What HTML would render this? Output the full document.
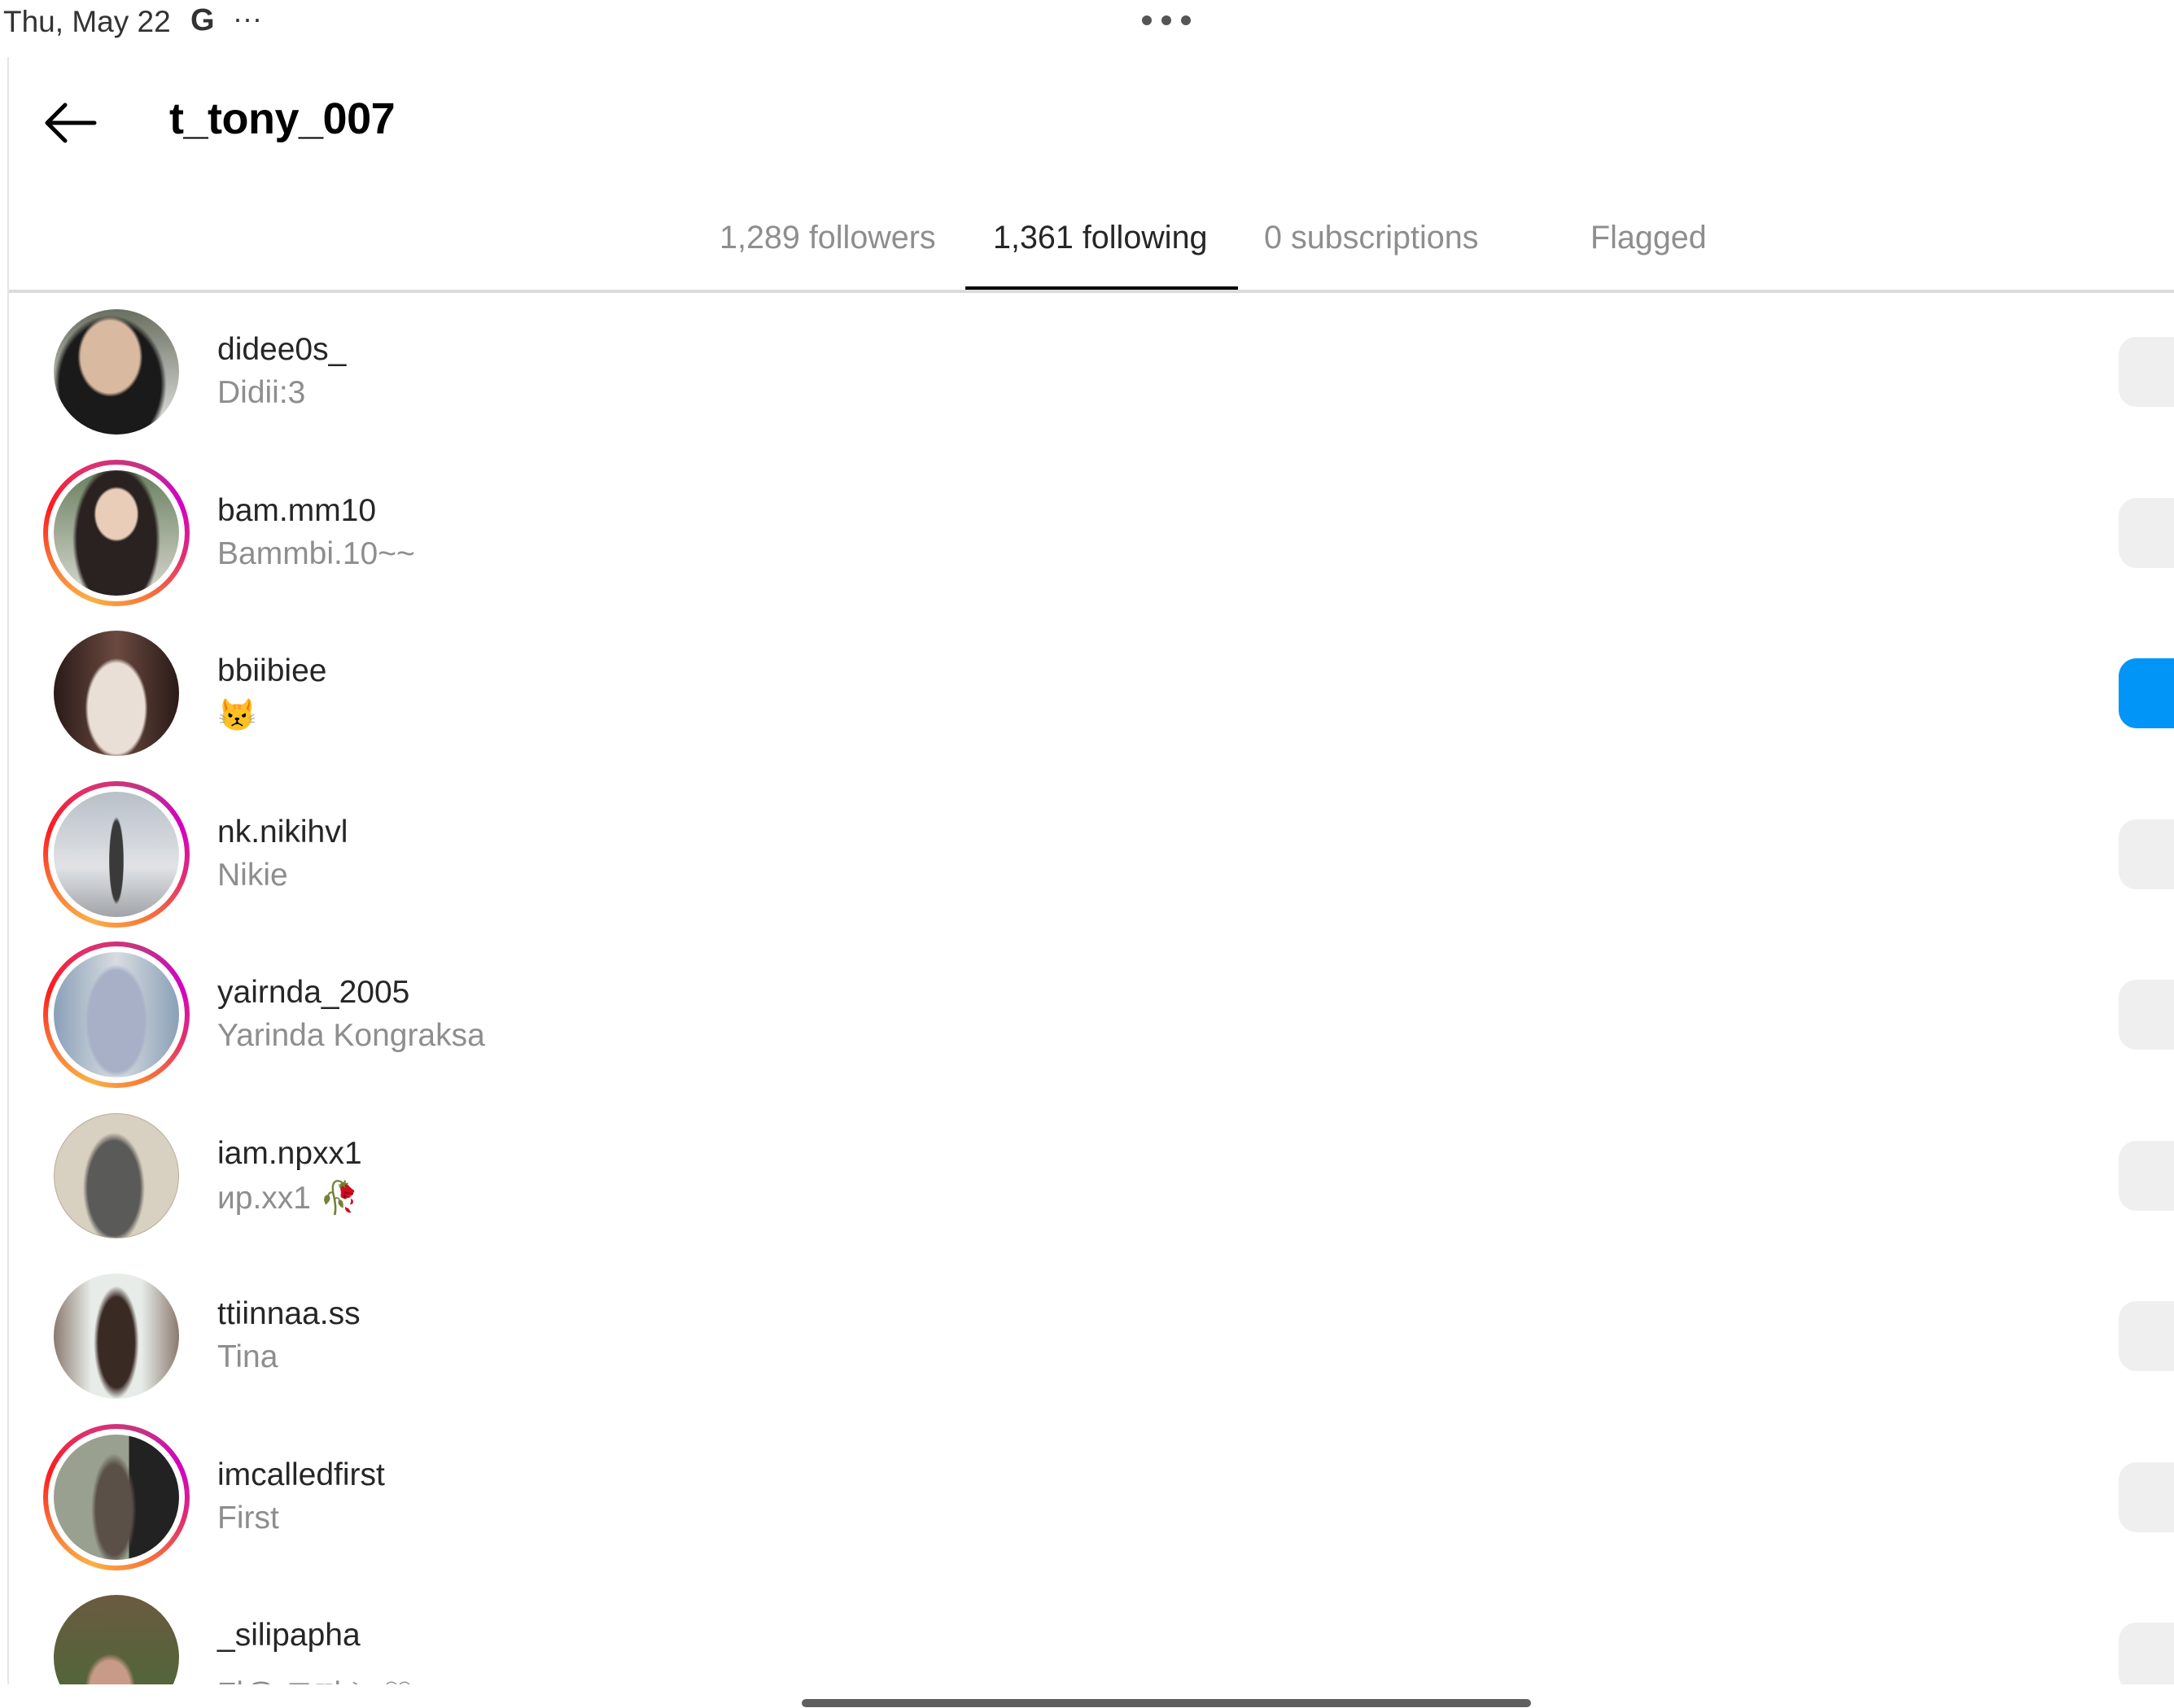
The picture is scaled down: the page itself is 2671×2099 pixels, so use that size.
<!DOCTYPE html>
<html><head><meta charset="utf-8"><style>
*{margin:0;padding:0;box-sizing:border-box}
body{width:2671px;height:2099px;background:#fff;position:relative;overflow:hidden;font-family:"Liberation Sans","Noto Sans CJK KR",sans-serif}
.a{position:absolute;white-space:nowrap}
.tab{position:absolute;top:270px;font-size:39.5px;color:#8e8e8e}
.row{position:absolute;left:0;width:2671px;height:198px}
.av{position:absolute;left:66px;width:154px;height:154px;border-radius:50%}
.ring{position:absolute;left:53px;width:180px;height:180px;border-radius:50%;background:conic-gradient(from 200deg,#fcaf45,#f77737,#fd1d1d,#e1306c,#c13584,#d300c5,#e1306c,#f77737,#fcaf45)}
.ring::after{content:"";position:absolute;left:6px;top:6px;right:6px;bottom:6px;border-radius:50%;background:#fff}
.un{position:absolute;left:267px;font-size:39px;color:#262626}
.sub{position:absolute;left:267px;font-size:39px;color:#8e8e8e}
.btn{position:absolute;left:2603px;width:100px;height:86px;border-radius:22px;background:#efefef}
</style></head><body>
<div class="a" style="left:4px;top:6px;font-size:37px;color:#333">Thu, May 22</div>
<div class="a" style="left:234px;top:4px;font-size:38px;font-weight:bold;color:#333">G</div>
<div class="a" style="left:286px;top:2px;font-size:36px;color:#333">···</div>
<div class="a" style="left:1403px;top:19px;width:62px;height:14px">
<span style="position:absolute;left:0;top:0;width:12px;height:12px;border-radius:50%;background:#555"></span>
<span style="position:absolute;left:24px;top:0;width:12px;height:12px;border-radius:50%;background:#555"></span>
<span style="position:absolute;left:48px;top:0;width:12px;height:12px;border-radius:50%;background:#555"></span></div>
<div class="a" style="left:9px;top:70px;width:2px;height:2000px;background:#e6e6e6"></div>
<svg class="a" style="left:52px;top:124px" width="70" height="54" viewBox="0 0 70 54"><path d="M64 27H6M28 5L6 27l22 22" fill="none" stroke="#000" stroke-width="5" stroke-linecap="round" stroke-linejoin="round"/></svg>
<div class="a" style="left:208px;top:115px;font-size:54px;font-weight:bold;color:#000;letter-spacing:-0.5px">t_tony_007</div>
<div class="tab" style="left:884px">1,289 followers</div>
<div class="tab" style="left:1220px;color:#262626">1,361 following</div>
<div class="tab" style="left:1553px">0 subscriptions</div>
<div class="tab" style="left:1954px">Flagged</div>
<div class="a" style="left:11px;top:356px;width:2660px;height:4px;background:#dbdbdb"></div>
<div class="a" style="left:1186px;top:352px;width:335px;height:4px;background:#000"></div>
<div class="a" style="left:0;top:360px;width:2671px;height:1710px;overflow:hidden">
<div style="position:absolute;left:0;top:-360px;width:2671px;height:2100px">
<div class="row" style="top:358px"><div class="av" style="top:22px;background:radial-gradient(ellipse 26% 32% at 45% 38%,#d9b9a0 0 90%,transparent 100%),radial-gradient(ellipse 45% 55% at 45% 60%,#1a1a1a 0 90%,transparent 100%),linear-gradient(#6a7060,#e8e8e8)"></div><div class="un" style="top:50px">didee0s_</div><div class="sub" style="top:103px">Didii:3</div><div class="btn" style="top:56px"></div></div>
<div class="row" style="top:556px"><div class="ring" style="top:9px"></div><div class="av" style="top:22px;background:radial-gradient(ellipse 18% 22% at 50% 35%,#e9cdb8 0 90%,transparent 100%),radial-gradient(ellipse 35% 60% at 50% 55%,#2a2220 0 90%,transparent 100%),linear-gradient(#6a8060,#d8d8d0)"></div><div class="un" style="top:50px">bam.mm10</div><div class="sub" style="top:103px">Bammbi.10~~</div><div class="btn" style="top:56px"></div></div>
<div class="row" style="top:753px"><div class="av" style="top:22px;background:radial-gradient(ellipse 25% 40% at 50% 62%,#e9dfd6 0 90%,transparent 100%),linear-gradient(90deg,#2a1a18,#6a4a40 50%,#2a1a18)"></div><div class="un" style="top:50px">bbiibiee</div><div class="sub" style="top:103px">😾</div><div class="btn" style="top:56px;background:#0095f6"></div></div>
<div class="row" style="top:951px"><div class="ring" style="top:9px"></div><div class="av" style="top:22px;background:radial-gradient(ellipse 6% 35% at 50% 55%,#3a3a3a 0 90%,transparent 100%),linear-gradient(#b8c0c8,#e0e2e6 60%,#a0a4a8)"></div><div class="un" style="top:50px">nk.nikihvl</div><div class="sub" style="top:103px">Nikie</div><div class="btn" style="top:56px"></div></div>
<div class="row" style="top:1148px"><div class="ring" style="top:9px"></div><div class="av" style="top:22px;background:radial-gradient(ellipse 25% 45% at 50% 55%,#a8b0c8 0 90%,transparent 100%),linear-gradient(90deg,#8aa0b8,#d8dce0 50%,#8aa0b8)"></div><div class="un" style="top:50px">yairnda_2005</div><div class="sub" style="top:103px">Yarinda Kongraksa</div><div class="btn" style="top:56px"></div></div>
<div class="row" style="top:1346px"><div class="av" style="top:22px;background:radial-gradient(ellipse 25% 45% at 48% 60%,#5a5a58 0 85%,transparent 100%),#d8d0c0;border:1px solid #b8ae98"></div><div class="un" style="top:50px">iam.npxx1</div><div class="sub" style="top:103px">ᴎp.xx1 🥀</div><div class="btn" style="top:56px"></div></div>
<div class="row" style="top:1543px"><div class="av" style="top:22px;background:radial-gradient(ellipse 18% 45% at 50% 55%,#3a2a24 0 80%,transparent 100%),linear-gradient(90deg,#8a7a70,#e8ece8 30%,#e8ece8 70%,#8a7a70)"></div><div class="un" style="top:50px">ttiinnaa.ss</div><div class="sub" style="top:103px">Tina</div><div class="btn" style="top:56px"></div></div>
<div class="row" style="top:1741px"><div class="ring" style="top:9px"></div><div class="av" style="top:22px;background:radial-gradient(ellipse 18% 45% at 48% 60%,#5a5048 0 80%,transparent 100%),linear-gradient(90deg,#9aa090 0 60%,#222 60%)"></div><div class="un" style="top:50px">imcalledfirst</div><div class="sub" style="top:103px">First</div><div class="btn" style="top:56px"></div></div>
<div class="row" style="top:1938px"><div class="av" style="top:22px;background:radial-gradient(ellipse 20% 28% at 45% 75%,#c89a88 0 80%,transparent 100%),linear-gradient(#6a5a40,#4a6a38)"></div><div class="un" style="top:50px">_silipapha</div><div class="sub" style="top:103px">작은 토끼 ༄♡</div><div class="btn" style="top:56px"></div></div>
</div></div>
<div class="a" style="left:985px;top:2088px;width:896px;height:10px;border-radius:5px;background:#5f5f5f"></div>
</body></html>
